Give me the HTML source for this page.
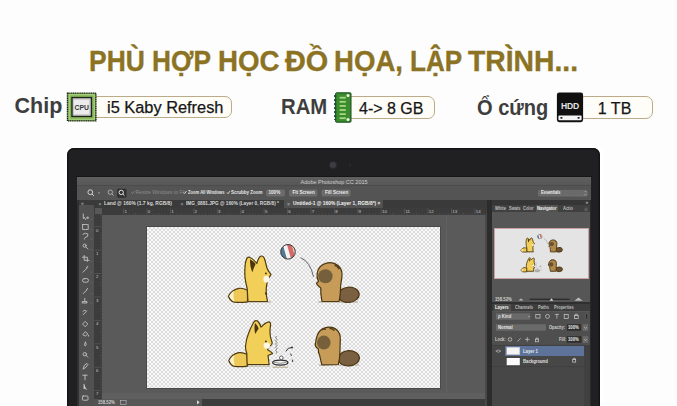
<!DOCTYPE html>
<html><head><meta charset="utf-8">
<style>

*{margin:0;padding:0;box-sizing:border-box}
html,body{width:677px;height:406px;overflow:hidden;background:#fdfdfd;font-family:"Liberation Sans",sans-serif}
.a{position:absolute}
.tw{position:absolute;top:46.5px;font-size:29px;line-height:1;font-weight:bold;color:#8b7323;-webkit-text-stroke:.35px #8b7323;white-space:nowrap;transform-origin:0 0}
.lbl{position:absolute;font-size:21.5px;line-height:1;font-weight:bold;color:#3e3e3e;white-space:nowrap;transform-origin:0 0}
.pill{position:absolute;border:1.2px solid #bcab88;background:#fffdf8;border-radius:7px}
.ptxt{position:absolute;font-size:16px;line-height:1;color:#161616;-webkit-text-stroke:.25px #161616;white-space:nowrap;transform-origin:0 0}
#bezel{left:66.7px;top:147.5px;width:533.6px;height:270px;background:#202023;border-radius:7px 7px 0 0;box-shadow:inset 0 0 0 1.5px #141416}
#screen{left:77px;top:176.8px;width:514px;height:230px;background:#535353}
.pst{white-space:nowrap;line-height:1}
.t5{white-space:nowrap;line-height:1;font-size:5px;transform-origin:0 0}
svg.a{overflow:visible}
.checker{background-color:#fff;background-image:conic-gradient(#dcdcdc 25%,#f8f8f8 0 50%,#dcdcdc 0 75%,#f8f8f8 0);background-size:4px 4px}

</style></head><body>
<div class="tw" style="left:89.3px;transform:scaleX(0.912)">PHÙ</div>
<div class="tw" style="left:151.8px;transform:scaleX(0.906)">HỢP</div>
<div class="tw" style="left:217.5px;transform:scaleX(0.955)">HỌC</div>
<div class="tw" style="left:285.2px;transform:scaleX(0.995)">ĐỒ</div>
<div class="tw" style="left:334.2px;transform:scaleX(0.952)">HỌA,</div>
<div class="tw" style="left:409.6px;transform:scaleX(0.9)">LẬP</div>
<div class="tw" style="left:468px;transform:scaleX(0.976)">TRÌNH...</div>

<div class="lbl" style="left:14.5px;top:96px">Chip</div>
<div class="lbl" style="left:280.7px;top:97.2px;transform:scaleX(.945)">RAM</div>
<div class="lbl" style="left:476.9px;top:98.4px;transform:scaleX(.933)">Ổ cứng</div>

<div class="pill" style="left:90px;top:95.9px;width:141.5px;height:22.6px"></div>
<div class="ptxt" style="left:106.8px;top:99.6px;transform:scaleX(1.023)">i5 Kaby Refresh</div>
<div class="pill" style="left:345px;top:96.2px;width:89.8px;height:23px"></div>
<div class="ptxt" style="left:359px;top:100.6px">4-&gt; 8 GB</div>
<div class="pill" style="left:578px;top:95.5px;width:74.8px;height:23px"></div>
<div class="ptxt" style="left:597.8px;top:100.5px">1 TB</div>

<!-- CPU icon -->
<svg class="a" style="left:66px;top:92px" width="31" height="30" viewBox="0 0 31 30">
 <rect x="1.5" y="1.1" width="28.4" height="27.8" fill="#82b157" stroke="#1b2413" stroke-width="1.4" stroke-dasharray="1.3 .5"/>
 <rect x="3.2" y="2.8" width="25" height="24.4" fill="none" stroke="#b9e08f" stroke-width=".8"/>
 <rect x="6" y="5.6" width="19.4" height="18.8" fill="#dcdcdc" stroke="#1f231c" stroke-width="1.4"/>
 <rect x="7.6" y="7.2" width="16.2" height="15.6" fill="#ececec" stroke="#b8b8b8" stroke-width=".6"/>
 <text x="15.7" y="17.9" font-family="Liberation Sans" font-weight="bold" font-size="6.8" fill="#383838" text-anchor="middle">CPU</text>
</svg>
<!-- RAM icon -->
<svg class="a" style="left:334px;top:92px" width="18" height="31" viewBox="0 0 18 31">
 <rect x="1.6" y="0.8" width="15.4" height="29.4" rx="1" fill="#3a8c2c" stroke="#1a4a1e" stroke-width="1"/>
 <path d="M1.2 3v25" stroke="#1f4f3a" stroke-width="2.2" stroke-dasharray="2.2 1.8"/>
 <g fill="#a6d883"><rect x="5.6" y="4.8" width="6.2" height="1.8"/><rect x="5.6" y="8.9" width="6.2" height="1.8"/><rect x="5.6" y="13" width="6.2" height="1.8"/><rect x="5.6" y="17.1" width="6.2" height="1.8"/><rect x="5.6" y="21.2" width="6.2" height="1.8"/><rect x="5.6" y="25.3" width="6.2" height="1.8"/></g>
 <circle cx="14" cy="3.4" r="1.5" fill="#f2fbe8"/><circle cx="14" cy="27.6" r="1.5" fill="#f2fbe8"/>
</svg>
<!-- HDD icon -->
<svg class="a" style="left:556px;top:91.5px" width="28" height="31" viewBox="0 0 28 31">
 <rect x="0.9" y="0.5" width="26.2" height="29.7" rx="2.4" fill="#101010"/>
 <text x="14" y="16.6" font-family="Liberation Sans" font-weight="bold" font-size="8.6" fill="#e2e2e2" text-anchor="middle" letter-spacing="-0.2">HDD</text>
 <rect x="2.4" y="23.4" width="23.2" height="4.9" rx="1" fill="#f4f4f4"/>
 <ellipse cx="5.4" cy="25.9" rx="1.2" ry=".8" fill="#101010"/><ellipse cx="22.6" cy="25.9" rx="1.2" ry=".8" fill="#101010"/>
</svg>

<div class="a" style="left:64px;top:144px;width:539px;height:270px;border-radius:9px 9px 0 0;background:#ffffff"></div>
<div id="bezel" class="a"></div>
<div class="a" style="left:329.8px;top:162.2px;width:6px;height:6px;border-radius:50%;background:#3c3c42;box-shadow:0 0 0 1px #2a2a2e"></div>
<div class="a" style="left:349px;top:164.2px;width:2px;height:2px;border-radius:50%;background:#2e2e32"></div>
<div id="screen" class="a"></div>
<div class="a" style="left:76px;top:175.9px;width:516px;height:1px;background:#161618"></div>
<!-- title bar -->
<div class="a" style="left:77px;top:176.8px;width:514px;height:8.5px;background:linear-gradient(#606060,#575757)"></div>
<!-- options bar -->
<div class="a" style="left:77px;top:185.3px;width:514px;height:14.5px;background:#545454;border-top:1px solid #4c4c4c"></div>
<!-- tab bar -->
<div class="a" style="left:77px;top:199.8px;width:415px;height:7.8px;background:#3a3a3a"></div>
<div class="a" style="left:283.6px;top:199.8px;width:99.6px;height:7.8px;background:#515151"></div>
<!-- left strip + toolbar -->
<div class="a" style="left:77px;top:199.8px;width:2px;height:207px;background:#303030"></div>
<div class="a" style="left:79px;top:205.4px;width:14.6px;height:201px;background:#515151"></div>
<!-- rulers -->
<div class="a" style="left:93.6px;top:207.6px;width:393.4px;height:7px;background:#3c3c3c"></div>
<div class="a" style="left:93.6px;top:207.6px;width:8px;height:191px;background:#3c3c3c"></div>
<div class="a" style="left:94.6px;top:208px;width:7px;height:6.4px;background:#585858"></div>
<!-- canvas -->
<div class="a" style="left:101.6px;top:214.6px;width:383px;height:178.4px;background:#5a5a5a"></div>
<div class="a" style="left:101.6px;top:393px;width:383px;height:5.7px;background:#5f5f5f"></div>
<div class="a" style="left:101.6px;top:398.7px;width:100px;height:8px;background:#575757"></div>
<div class="a" style="left:201.7px;top:398.7px;width:283px;height:8px;background:#3c3c3c"></div>
<div class="a" style="left:484.6px;top:214.6px;width:2.4px;height:192px;background:#484848"></div>
<div class="a" style="left:487px;top:199.8px;width:5px;height:207px;background:#2c2c2c"></div>
<div class="a" style="left:446px;top:214.6px;width:.8px;height:178.4px;background:#616161"></div>
<!-- image -->
<div class="a checker" style="left:147px;top:226.7px;width:292.8px;height:161.3px;box-shadow:0 0 0 1px #4a4a4a"></div>
<!-- panel -->
<div class="a" style="left:492px;top:199.8px;width:98.9px;height:207px;background:#565656"></div>
<div class="a" style="left:492px;top:199.8px;width:98.9px;height:5.2px;background:#363636"></div>
<div class="a" style="left:492px;top:205px;width:98.9px;height:7px;background:#404040"></div>
<div class="a" style="left:535.8px;top:205px;width:22.6px;height:7px;background:#545454"></div>
<div class="a" style="left:494px;top:227.8px;width:95px;height:51.7px;background:#e4e4e4;border:1px solid #c9a3a3"></div>
<div class="a" style="left:492px;top:302px;width:98.9px;height:1.6px;background:#303030"></div>
<div class="a" style="left:492px;top:303.6px;width:98.9px;height:7.9px;background:#3d3d3d"></div>
<div class="a" style="left:494.3px;top:303.6px;width:16.4px;height:7.9px;background:#505050"></div>
<div class="a" style="left:492px;top:311.5px;width:98.9px;height:33.7px;background:#4f4f4f"></div>
<div class="a" style="left:492px;top:345.2px;width:91.7px;height:62px;background:#474747"></div>
<div class="a" style="left:583.7px;top:345.2px;width:6px;height:62px;background:#404040"></div>
<div class="a" style="left:504.8px;top:345.7px;width:78.9px;height:10.7px;background:#5d7399"></div>
<div class="a" style="left:589.7px;top:199.8px;width:1.3px;height:207px;background:#2a2a2a"></div>

<svg class="a" style="left:93px;top:207px" width="395" height="8" viewBox="93 207 395 8">
<line x1="123.6" y1="208.5" x2="123.6" y2="214.6" stroke="#6e6e6e" stroke-width=".45"/>
<text x="124.4" y="212.6" font-family="Liberation Sans" font-size="4.4" fill="#c8c8c8">1</text>
<line x1="126.5" y1="213.7" x2="126.5" y2="214.6" stroke="#7a7a7a" stroke-width=".4"/>
<line x1="129.4" y1="213.7" x2="129.4" y2="214.6" stroke="#7a7a7a" stroke-width=".4"/>
<line x1="132.4" y1="213.7" x2="132.4" y2="214.6" stroke="#7a7a7a" stroke-width=".4"/>
<line x1="135.3" y1="213.0" x2="135.3" y2="214.6" stroke="#7a7a7a" stroke-width=".4"/>
<line x1="138.2" y1="213.7" x2="138.2" y2="214.6" stroke="#7a7a7a" stroke-width=".4"/>
<line x1="141.1" y1="213.7" x2="141.1" y2="214.6" stroke="#7a7a7a" stroke-width=".4"/>
<line x1="144.1" y1="213.7" x2="144.1" y2="214.6" stroke="#7a7a7a" stroke-width=".4"/>
<line x1="147.0" y1="208.5" x2="147.0" y2="214.6" stroke="#6e6e6e" stroke-width=".45"/>
<text x="147.8" y="212.6" font-family="Liberation Sans" font-size="4.4" fill="#c8c8c8">0</text>
<line x1="149.9" y1="213.7" x2="149.9" y2="214.6" stroke="#7a7a7a" stroke-width=".4"/>
<line x1="152.9" y1="213.7" x2="152.9" y2="214.6" stroke="#7a7a7a" stroke-width=".4"/>
<line x1="155.8" y1="213.7" x2="155.8" y2="214.6" stroke="#7a7a7a" stroke-width=".4"/>
<line x1="158.7" y1="213.0" x2="158.7" y2="214.6" stroke="#7a7a7a" stroke-width=".4"/>
<line x1="161.6" y1="213.7" x2="161.6" y2="214.6" stroke="#7a7a7a" stroke-width=".4"/>
<line x1="164.6" y1="213.7" x2="164.6" y2="214.6" stroke="#7a7a7a" stroke-width=".4"/>
<line x1="167.5" y1="213.7" x2="167.5" y2="214.6" stroke="#7a7a7a" stroke-width=".4"/>
<line x1="170.4" y1="208.5" x2="170.4" y2="214.6" stroke="#6e6e6e" stroke-width=".45"/>
<text x="171.2" y="212.6" font-family="Liberation Sans" font-size="4.4" fill="#c8c8c8">1</text>
<line x1="173.3" y1="213.7" x2="173.3" y2="214.6" stroke="#7a7a7a" stroke-width=".4"/>
<line x1="176.3" y1="213.7" x2="176.3" y2="214.6" stroke="#7a7a7a" stroke-width=".4"/>
<line x1="179.2" y1="213.7" x2="179.2" y2="214.6" stroke="#7a7a7a" stroke-width=".4"/>
<line x1="182.1" y1="213.0" x2="182.1" y2="214.6" stroke="#7a7a7a" stroke-width=".4"/>
<line x1="185.1" y1="213.7" x2="185.1" y2="214.6" stroke="#7a7a7a" stroke-width=".4"/>
<line x1="188.0" y1="213.7" x2="188.0" y2="214.6" stroke="#7a7a7a" stroke-width=".4"/>
<line x1="190.9" y1="213.7" x2="190.9" y2="214.6" stroke="#7a7a7a" stroke-width=".4"/>
<line x1="193.8" y1="208.5" x2="193.8" y2="214.6" stroke="#6e6e6e" stroke-width=".45"/>
<text x="194.6" y="212.6" font-family="Liberation Sans" font-size="4.4" fill="#c8c8c8">2</text>
<line x1="196.8" y1="213.7" x2="196.8" y2="214.6" stroke="#7a7a7a" stroke-width=".4"/>
<line x1="199.7" y1="213.7" x2="199.7" y2="214.6" stroke="#7a7a7a" stroke-width=".4"/>
<line x1="202.6" y1="213.7" x2="202.6" y2="214.6" stroke="#7a7a7a" stroke-width=".4"/>
<line x1="205.6" y1="213.0" x2="205.6" y2="214.6" stroke="#7a7a7a" stroke-width=".4"/>
<line x1="208.5" y1="213.7" x2="208.5" y2="214.6" stroke="#7a7a7a" stroke-width=".4"/>
<line x1="211.4" y1="213.7" x2="211.4" y2="214.6" stroke="#7a7a7a" stroke-width=".4"/>
<line x1="214.3" y1="213.7" x2="214.3" y2="214.6" stroke="#7a7a7a" stroke-width=".4"/>
<line x1="217.3" y1="208.5" x2="217.3" y2="214.6" stroke="#6e6e6e" stroke-width=".45"/>
<text x="218.1" y="212.6" font-family="Liberation Sans" font-size="4.4" fill="#c8c8c8">3</text>
<line x1="220.2" y1="213.7" x2="220.2" y2="214.6" stroke="#7a7a7a" stroke-width=".4"/>
<line x1="223.1" y1="213.7" x2="223.1" y2="214.6" stroke="#7a7a7a" stroke-width=".4"/>
<line x1="226.0" y1="213.7" x2="226.0" y2="214.6" stroke="#7a7a7a" stroke-width=".4"/>
<line x1="229.0" y1="213.0" x2="229.0" y2="214.6" stroke="#7a7a7a" stroke-width=".4"/>
<line x1="231.9" y1="213.7" x2="231.9" y2="214.6" stroke="#7a7a7a" stroke-width=".4"/>
<line x1="234.8" y1="213.7" x2="234.8" y2="214.6" stroke="#7a7a7a" stroke-width=".4"/>
<line x1="237.8" y1="213.7" x2="237.8" y2="214.6" stroke="#7a7a7a" stroke-width=".4"/>
<line x1="240.7" y1="208.5" x2="240.7" y2="214.6" stroke="#6e6e6e" stroke-width=".45"/>
<text x="241.5" y="212.6" font-family="Liberation Sans" font-size="4.4" fill="#c8c8c8">4</text>
<line x1="243.6" y1="213.7" x2="243.6" y2="214.6" stroke="#7a7a7a" stroke-width=".4"/>
<line x1="246.5" y1="213.7" x2="246.5" y2="214.6" stroke="#7a7a7a" stroke-width=".4"/>
<line x1="249.5" y1="213.7" x2="249.5" y2="214.6" stroke="#7a7a7a" stroke-width=".4"/>
<line x1="252.4" y1="213.0" x2="252.4" y2="214.6" stroke="#7a7a7a" stroke-width=".4"/>
<line x1="255.3" y1="213.7" x2="255.3" y2="214.6" stroke="#7a7a7a" stroke-width=".4"/>
<line x1="258.2" y1="213.7" x2="258.2" y2="214.6" stroke="#7a7a7a" stroke-width=".4"/>
<line x1="261.2" y1="213.7" x2="261.2" y2="214.6" stroke="#7a7a7a" stroke-width=".4"/>
<line x1="264.1" y1="208.5" x2="264.1" y2="214.6" stroke="#6e6e6e" stroke-width=".45"/>
<text x="264.9" y="212.6" font-family="Liberation Sans" font-size="4.4" fill="#c8c8c8">5</text>
<line x1="267.0" y1="213.7" x2="267.0" y2="214.6" stroke="#7a7a7a" stroke-width=".4"/>
<line x1="270.0" y1="213.7" x2="270.0" y2="214.6" stroke="#7a7a7a" stroke-width=".4"/>
<line x1="272.9" y1="213.7" x2="272.9" y2="214.6" stroke="#7a7a7a" stroke-width=".4"/>
<line x1="275.8" y1="213.0" x2="275.8" y2="214.6" stroke="#7a7a7a" stroke-width=".4"/>
<line x1="278.7" y1="213.7" x2="278.7" y2="214.6" stroke="#7a7a7a" stroke-width=".4"/>
<line x1="281.7" y1="213.7" x2="281.7" y2="214.6" stroke="#7a7a7a" stroke-width=".4"/>
<line x1="284.6" y1="213.7" x2="284.6" y2="214.6" stroke="#7a7a7a" stroke-width=".4"/>
<line x1="287.5" y1="208.5" x2="287.5" y2="214.6" stroke="#6e6e6e" stroke-width=".45"/>
<text x="288.3" y="212.6" font-family="Liberation Sans" font-size="4.4" fill="#c8c8c8">6</text>
<line x1="290.4" y1="213.7" x2="290.4" y2="214.6" stroke="#7a7a7a" stroke-width=".4"/>
<line x1="293.4" y1="213.7" x2="293.4" y2="214.6" stroke="#7a7a7a" stroke-width=".4"/>
<line x1="296.3" y1="213.7" x2="296.3" y2="214.6" stroke="#7a7a7a" stroke-width=".4"/>
<line x1="299.2" y1="213.0" x2="299.2" y2="214.6" stroke="#7a7a7a" stroke-width=".4"/>
<line x1="302.2" y1="213.7" x2="302.2" y2="214.6" stroke="#7a7a7a" stroke-width=".4"/>
<line x1="305.1" y1="213.7" x2="305.1" y2="214.6" stroke="#7a7a7a" stroke-width=".4"/>
<line x1="308.0" y1="213.7" x2="308.0" y2="214.6" stroke="#7a7a7a" stroke-width=".4"/>
<line x1="310.9" y1="208.5" x2="310.9" y2="214.6" stroke="#6e6e6e" stroke-width=".45"/>
<text x="311.7" y="212.6" font-family="Liberation Sans" font-size="4.4" fill="#c8c8c8">7</text>
<line x1="313.9" y1="213.7" x2="313.9" y2="214.6" stroke="#7a7a7a" stroke-width=".4"/>
<line x1="316.8" y1="213.7" x2="316.8" y2="214.6" stroke="#7a7a7a" stroke-width=".4"/>
<line x1="319.7" y1="213.7" x2="319.7" y2="214.6" stroke="#7a7a7a" stroke-width=".4"/>
<line x1="322.6" y1="213.0" x2="322.6" y2="214.6" stroke="#7a7a7a" stroke-width=".4"/>
<line x1="325.6" y1="213.7" x2="325.6" y2="214.6" stroke="#7a7a7a" stroke-width=".4"/>
<line x1="328.5" y1="213.7" x2="328.5" y2="214.6" stroke="#7a7a7a" stroke-width=".4"/>
<line x1="331.4" y1="213.7" x2="331.4" y2="214.6" stroke="#7a7a7a" stroke-width=".4"/>
<line x1="334.4" y1="208.5" x2="334.4" y2="214.6" stroke="#6e6e6e" stroke-width=".45"/>
<text x="335.2" y="212.6" font-family="Liberation Sans" font-size="4.4" fill="#c8c8c8">8</text>
<line x1="337.3" y1="213.7" x2="337.3" y2="214.6" stroke="#7a7a7a" stroke-width=".4"/>
<line x1="340.2" y1="213.7" x2="340.2" y2="214.6" stroke="#7a7a7a" stroke-width=".4"/>
<line x1="343.1" y1="213.7" x2="343.1" y2="214.6" stroke="#7a7a7a" stroke-width=".4"/>
<line x1="346.1" y1="213.0" x2="346.1" y2="214.6" stroke="#7a7a7a" stroke-width=".4"/>
<line x1="349.0" y1="213.7" x2="349.0" y2="214.6" stroke="#7a7a7a" stroke-width=".4"/>
<line x1="351.9" y1="213.7" x2="351.9" y2="214.6" stroke="#7a7a7a" stroke-width=".4"/>
<line x1="354.9" y1="213.7" x2="354.9" y2="214.6" stroke="#7a7a7a" stroke-width=".4"/>
<line x1="357.8" y1="208.5" x2="357.8" y2="214.6" stroke="#6e6e6e" stroke-width=".45"/>
<text x="358.6" y="212.6" font-family="Liberation Sans" font-size="4.4" fill="#c8c8c8">9</text>
<line x1="360.7" y1="213.7" x2="360.7" y2="214.6" stroke="#7a7a7a" stroke-width=".4"/>
<line x1="363.6" y1="213.7" x2="363.6" y2="214.6" stroke="#7a7a7a" stroke-width=".4"/>
<line x1="366.6" y1="213.7" x2="366.6" y2="214.6" stroke="#7a7a7a" stroke-width=".4"/>
<line x1="369.5" y1="213.0" x2="369.5" y2="214.6" stroke="#7a7a7a" stroke-width=".4"/>
<line x1="372.4" y1="213.7" x2="372.4" y2="214.6" stroke="#7a7a7a" stroke-width=".4"/>
<line x1="375.3" y1="213.7" x2="375.3" y2="214.6" stroke="#7a7a7a" stroke-width=".4"/>
<line x1="378.3" y1="213.7" x2="378.3" y2="214.6" stroke="#7a7a7a" stroke-width=".4"/>
<line x1="381.2" y1="208.5" x2="381.2" y2="214.6" stroke="#6e6e6e" stroke-width=".45"/>
<text x="382.0" y="212.6" font-family="Liberation Sans" font-size="4.4" fill="#c8c8c8">10</text>
<line x1="384.1" y1="213.7" x2="384.1" y2="214.6" stroke="#7a7a7a" stroke-width=".4"/>
<line x1="387.1" y1="213.7" x2="387.1" y2="214.6" stroke="#7a7a7a" stroke-width=".4"/>
<line x1="390.0" y1="213.7" x2="390.0" y2="214.6" stroke="#7a7a7a" stroke-width=".4"/>
<line x1="392.9" y1="213.0" x2="392.9" y2="214.6" stroke="#7a7a7a" stroke-width=".4"/>
<line x1="395.8" y1="213.7" x2="395.8" y2="214.6" stroke="#7a7a7a" stroke-width=".4"/>
<line x1="398.8" y1="213.7" x2="398.8" y2="214.6" stroke="#7a7a7a" stroke-width=".4"/>
<line x1="401.7" y1="213.7" x2="401.7" y2="214.6" stroke="#7a7a7a" stroke-width=".4"/>
<line x1="404.6" y1="208.5" x2="404.6" y2="214.6" stroke="#6e6e6e" stroke-width=".45"/>
<text x="405.4" y="212.6" font-family="Liberation Sans" font-size="4.4" fill="#c8c8c8">11</text>
<line x1="407.5" y1="213.7" x2="407.5" y2="214.6" stroke="#7a7a7a" stroke-width=".4"/>
<line x1="410.5" y1="213.7" x2="410.5" y2="214.6" stroke="#7a7a7a" stroke-width=".4"/>
<line x1="413.4" y1="213.7" x2="413.4" y2="214.6" stroke="#7a7a7a" stroke-width=".4"/>
<line x1="416.3" y1="213.0" x2="416.3" y2="214.6" stroke="#7a7a7a" stroke-width=".4"/>
<line x1="419.3" y1="213.7" x2="419.3" y2="214.6" stroke="#7a7a7a" stroke-width=".4"/>
<line x1="422.2" y1="213.7" x2="422.2" y2="214.6" stroke="#7a7a7a" stroke-width=".4"/>
<line x1="425.1" y1="213.7" x2="425.1" y2="214.6" stroke="#7a7a7a" stroke-width=".4"/>
<line x1="428.0" y1="208.5" x2="428.0" y2="214.6" stroke="#6e6e6e" stroke-width=".45"/>
<text x="428.8" y="212.6" font-family="Liberation Sans" font-size="4.4" fill="#c8c8c8">12</text>
<line x1="431.0" y1="213.7" x2="431.0" y2="214.6" stroke="#7a7a7a" stroke-width=".4"/>
<line x1="433.9" y1="213.7" x2="433.9" y2="214.6" stroke="#7a7a7a" stroke-width=".4"/>
<line x1="436.8" y1="213.7" x2="436.8" y2="214.6" stroke="#7a7a7a" stroke-width=".4"/>
<line x1="439.8" y1="213.0" x2="439.8" y2="214.6" stroke="#7a7a7a" stroke-width=".4"/>
<line x1="442.7" y1="213.7" x2="442.7" y2="214.6" stroke="#7a7a7a" stroke-width=".4"/>
<line x1="445.6" y1="213.7" x2="445.6" y2="214.6" stroke="#7a7a7a" stroke-width=".4"/>
<line x1="448.5" y1="213.7" x2="448.5" y2="214.6" stroke="#7a7a7a" stroke-width=".4"/>
<line x1="451.5" y1="208.5" x2="451.5" y2="214.6" stroke="#6e6e6e" stroke-width=".45"/>
<text x="452.3" y="212.6" font-family="Liberation Sans" font-size="4.4" fill="#c8c8c8">13</text>
<line x1="454.4" y1="213.7" x2="454.4" y2="214.6" stroke="#7a7a7a" stroke-width=".4"/>
<line x1="457.3" y1="213.7" x2="457.3" y2="214.6" stroke="#7a7a7a" stroke-width=".4"/>
<line x1="460.2" y1="213.7" x2="460.2" y2="214.6" stroke="#7a7a7a" stroke-width=".4"/>
<line x1="463.2" y1="213.0" x2="463.2" y2="214.6" stroke="#7a7a7a" stroke-width=".4"/>
<line x1="466.1" y1="213.7" x2="466.1" y2="214.6" stroke="#7a7a7a" stroke-width=".4"/>
<line x1="469.0" y1="213.7" x2="469.0" y2="214.6" stroke="#7a7a7a" stroke-width=".4"/>
<line x1="472.0" y1="213.7" x2="472.0" y2="214.6" stroke="#7a7a7a" stroke-width=".4"/>
<line x1="474.9" y1="208.5" x2="474.9" y2="214.6" stroke="#6e6e6e" stroke-width=".45"/>
<text x="475.7" y="212.6" font-family="Liberation Sans" font-size="4.4" fill="#c8c8c8">14</text>
<line x1="477.8" y1="213.7" x2="477.8" y2="214.6" stroke="#7a7a7a" stroke-width=".4"/>
<line x1="480.7" y1="213.7" x2="480.7" y2="214.6" stroke="#7a7a7a" stroke-width=".4"/>
<line x1="483.7" y1="213.7" x2="483.7" y2="214.6" stroke="#7a7a7a" stroke-width=".4"/>
<line x1="486.6" y1="213.0" x2="486.6" y2="214.6" stroke="#7a7a7a" stroke-width=".4"/>
</svg>
<svg class="a" style="left:93px;top:214px" width="9" height="186" viewBox="93 214 9 186">
<line x1="94.5" y1="226.7" x2="101.6" y2="226.7" stroke="#6e6e6e" stroke-width=".45"/>
<text x="96" y="231.5" font-family="Liberation Sans" font-size="4.4" fill="#c8c8c8">0</text>
<line x1="100.7" y1="229.6" x2="101.6" y2="229.6" stroke="#7a7a7a" stroke-width=".4"/>
<line x1="100.7" y1="232.6" x2="101.6" y2="232.6" stroke="#7a7a7a" stroke-width=".4"/>
<line x1="100.7" y1="235.5" x2="101.6" y2="235.5" stroke="#7a7a7a" stroke-width=".4"/>
<line x1="100.0" y1="238.4" x2="101.6" y2="238.4" stroke="#7a7a7a" stroke-width=".4"/>
<line x1="100.7" y1="241.3" x2="101.6" y2="241.3" stroke="#7a7a7a" stroke-width=".4"/>
<line x1="100.7" y1="244.3" x2="101.6" y2="244.3" stroke="#7a7a7a" stroke-width=".4"/>
<line x1="100.7" y1="247.2" x2="101.6" y2="247.2" stroke="#7a7a7a" stroke-width=".4"/>
<line x1="94.5" y1="250.1" x2="101.6" y2="250.1" stroke="#6e6e6e" stroke-width=".45"/>
<text x="96" y="254.9" font-family="Liberation Sans" font-size="4.4" fill="#c8c8c8">1</text>
<line x1="100.7" y1="253.0" x2="101.6" y2="253.0" stroke="#7a7a7a" stroke-width=".4"/>
<line x1="100.7" y1="256.0" x2="101.6" y2="256.0" stroke="#7a7a7a" stroke-width=".4"/>
<line x1="100.7" y1="258.9" x2="101.6" y2="258.9" stroke="#7a7a7a" stroke-width=".4"/>
<line x1="100.0" y1="261.8" x2="101.6" y2="261.8" stroke="#7a7a7a" stroke-width=".4"/>
<line x1="100.7" y1="264.8" x2="101.6" y2="264.8" stroke="#7a7a7a" stroke-width=".4"/>
<line x1="100.7" y1="267.7" x2="101.6" y2="267.7" stroke="#7a7a7a" stroke-width=".4"/>
<line x1="100.7" y1="270.6" x2="101.6" y2="270.6" stroke="#7a7a7a" stroke-width=".4"/>
<line x1="94.5" y1="273.5" x2="101.6" y2="273.5" stroke="#6e6e6e" stroke-width=".45"/>
<text x="96" y="278.3" font-family="Liberation Sans" font-size="4.4" fill="#c8c8c8">2</text>
<line x1="100.7" y1="276.5" x2="101.6" y2="276.5" stroke="#7a7a7a" stroke-width=".4"/>
<line x1="100.7" y1="279.4" x2="101.6" y2="279.4" stroke="#7a7a7a" stroke-width=".4"/>
<line x1="100.7" y1="282.3" x2="101.6" y2="282.3" stroke="#7a7a7a" stroke-width=".4"/>
<line x1="100.0" y1="285.2" x2="101.6" y2="285.2" stroke="#7a7a7a" stroke-width=".4"/>
<line x1="100.7" y1="288.2" x2="101.6" y2="288.2" stroke="#7a7a7a" stroke-width=".4"/>
<line x1="100.7" y1="291.1" x2="101.6" y2="291.1" stroke="#7a7a7a" stroke-width=".4"/>
<line x1="100.7" y1="294.0" x2="101.6" y2="294.0" stroke="#7a7a7a" stroke-width=".4"/>
<line x1="94.5" y1="297.0" x2="101.6" y2="297.0" stroke="#6e6e6e" stroke-width=".45"/>
<text x="96" y="301.8" font-family="Liberation Sans" font-size="4.4" fill="#c8c8c8">3</text>
<line x1="100.7" y1="299.9" x2="101.6" y2="299.9" stroke="#7a7a7a" stroke-width=".4"/>
<line x1="100.7" y1="302.8" x2="101.6" y2="302.8" stroke="#7a7a7a" stroke-width=".4"/>
<line x1="100.7" y1="305.7" x2="101.6" y2="305.7" stroke="#7a7a7a" stroke-width=".4"/>
<line x1="100.0" y1="308.7" x2="101.6" y2="308.7" stroke="#7a7a7a" stroke-width=".4"/>
<line x1="100.7" y1="311.6" x2="101.6" y2="311.6" stroke="#7a7a7a" stroke-width=".4"/>
<line x1="100.7" y1="314.5" x2="101.6" y2="314.5" stroke="#7a7a7a" stroke-width=".4"/>
<line x1="100.7" y1="317.5" x2="101.6" y2="317.5" stroke="#7a7a7a" stroke-width=".4"/>
<line x1="94.5" y1="320.4" x2="101.6" y2="320.4" stroke="#6e6e6e" stroke-width=".45"/>
<text x="96" y="325.2" font-family="Liberation Sans" font-size="4.4" fill="#c8c8c8">4</text>
<line x1="100.7" y1="323.3" x2="101.6" y2="323.3" stroke="#7a7a7a" stroke-width=".4"/>
<line x1="100.7" y1="326.2" x2="101.6" y2="326.2" stroke="#7a7a7a" stroke-width=".4"/>
<line x1="100.7" y1="329.2" x2="101.6" y2="329.2" stroke="#7a7a7a" stroke-width=".4"/>
<line x1="100.0" y1="332.1" x2="101.6" y2="332.1" stroke="#7a7a7a" stroke-width=".4"/>
<line x1="100.7" y1="335.0" x2="101.6" y2="335.0" stroke="#7a7a7a" stroke-width=".4"/>
<line x1="100.7" y1="337.9" x2="101.6" y2="337.9" stroke="#7a7a7a" stroke-width=".4"/>
<line x1="100.7" y1="340.9" x2="101.6" y2="340.9" stroke="#7a7a7a" stroke-width=".4"/>
<line x1="94.5" y1="343.8" x2="101.6" y2="343.8" stroke="#6e6e6e" stroke-width=".45"/>
<text x="96" y="348.6" font-family="Liberation Sans" font-size="4.4" fill="#c8c8c8">5</text>
<line x1="100.7" y1="346.7" x2="101.6" y2="346.7" stroke="#7a7a7a" stroke-width=".4"/>
<line x1="100.7" y1="349.7" x2="101.6" y2="349.7" stroke="#7a7a7a" stroke-width=".4"/>
<line x1="100.7" y1="352.6" x2="101.6" y2="352.6" stroke="#7a7a7a" stroke-width=".4"/>
<line x1="100.0" y1="355.5" x2="101.6" y2="355.5" stroke="#7a7a7a" stroke-width=".4"/>
<line x1="100.7" y1="358.4" x2="101.6" y2="358.4" stroke="#7a7a7a" stroke-width=".4"/>
<line x1="100.7" y1="361.4" x2="101.6" y2="361.4" stroke="#7a7a7a" stroke-width=".4"/>
<line x1="100.7" y1="364.3" x2="101.6" y2="364.3" stroke="#7a7a7a" stroke-width=".4"/>
<line x1="94.5" y1="367.2" x2="101.6" y2="367.2" stroke="#6e6e6e" stroke-width=".45"/>
<text x="96" y="372.0" font-family="Liberation Sans" font-size="4.4" fill="#c8c8c8">6</text>
<line x1="100.7" y1="370.1" x2="101.6" y2="370.1" stroke="#7a7a7a" stroke-width=".4"/>
<line x1="100.7" y1="373.1" x2="101.6" y2="373.1" stroke="#7a7a7a" stroke-width=".4"/>
<line x1="100.7" y1="376.0" x2="101.6" y2="376.0" stroke="#7a7a7a" stroke-width=".4"/>
<line x1="100.0" y1="378.9" x2="101.6" y2="378.9" stroke="#7a7a7a" stroke-width=".4"/>
<line x1="100.7" y1="381.9" x2="101.6" y2="381.9" stroke="#7a7a7a" stroke-width=".4"/>
<line x1="100.7" y1="384.8" x2="101.6" y2="384.8" stroke="#7a7a7a" stroke-width=".4"/>
<line x1="100.7" y1="387.7" x2="101.6" y2="387.7" stroke="#7a7a7a" stroke-width=".4"/>
<line x1="94.5" y1="390.6" x2="101.6" y2="390.6" stroke="#6e6e6e" stroke-width=".45"/>
<text x="96" y="395.4" font-family="Liberation Sans" font-size="4.4" fill="#c8c8c8">7</text>
<line x1="100.7" y1="393.6" x2="101.6" y2="393.6" stroke="#7a7a7a" stroke-width=".4"/>
<line x1="100.7" y1="396.5" x2="101.6" y2="396.5" stroke="#7a7a7a" stroke-width=".4"/>
<line x1="100.7" y1="223.8" x2="101.6" y2="223.8" stroke="#7a7a7a" stroke-width=".4"/>
<line x1="100.7" y1="220.8" x2="101.6" y2="220.8" stroke="#7a7a7a" stroke-width=".4"/>
<line x1="100.7" y1="217.9" x2="101.6" y2="217.9" stroke="#7a7a7a" stroke-width=".4"/>
<line x1="100.0" y1="215.0" x2="101.6" y2="215.0" stroke="#7a7a7a" stroke-width=".4"/>
</svg>
<svg class="a" style="left:79px;top:205px" width="15" height="202" viewBox="79 205 15 202">
<g fill="none" stroke="#c4c4c4" stroke-width=".9" stroke-linecap="round">
 <path d="M83.3 214v4.6l1.2-1.1 1.1 2" /><circle cx="87.6" cy="217.8" r="1.3" fill="#aaa" stroke="none"/>
 <rect x="82.6" y="224.5" width="5.6" height="5" stroke-dasharray="1 .7"/>
 <path d="M83 234.2q2.5-2 5 0q0 3-3 3.4q-1 .5-.6 1.5"/>
 <circle cx="84.6" cy="245.6" r="1.6"/><path d="M85.7 246.8l2.3 2.3"/>
 <path d="M82.5 257.2h4.8v4.2M84.2 255.5v4.8h4.8"/>
 <path d="M83 272.2l4.5-4.5M86.5 267.6l1.4-1.4"/>
 <rect x="82.5" y="278.6" width="6" height="3.6" rx="1.8"/>
 <path d="M83.2 293.6l3.6-3.6M86.5 289.5l1.2-1"/>
 <path d="M84.8 298.5v2.2M82.6 301.6h4.4v1.4h-4.4z"/>
 <path d="M83.2 314.6l3.6-3.6M83 311.2q1.2-1.4 2.6-.8"/>
 <path d="M82.8 323.8l2.4-2.4 2.6 2.6-2.4 2.4z"/>
 <path d="M83 334.4l2.4-2.8 2.4 2.4-2.2 1.8zM88.4 335.2v1"/>
 <path d="M85.4 342.2q-2 2.6-.2 3.8q2 -1 .2-3.8z"/>
 <circle cx="84.8" cy="354.2" r="1.7"/><path d="M86 355.4l1.8 1.8"/>
 <path d="M83.2 368.8l1.2-3.6 2.6-1.8 1 1-1.8 2.6z"/>
 <path d="M82.8 375.2h4.4M85 375.2v4.6"/>
 <path d="M84 384.2v4.8l1.2-1.2 1.2 1.8" fill="#ddd"/>
 <rect x="82.4" y="396" width="5.6" height="4.2" rx=".8"/>
</g>
<path d="M90.6 218.8l.9.9.9-.9M90.6 229l.9.9.9-.9M90.6 238.8l.9.9.9-.9M90.6 249l.9.9.9-.9M90.6 260.6l.9.9.9-.9M90.6 271.5l.9.9.9-.9M90.6 282.4l.9.9.9-.9M90.6 293.2l.9.9.9-.9M90.6 303l.9.9.9-.9" fill="none" stroke="#888" stroke-width=".4"/>
</svg>

<!-- PS UI texts -->
<div class="a t5" style="left:300.6px;top:179.6px;font-size:5.5px;color:#d0d0d0">Adobe Photoshop CC 2015</div>
<!-- options bar -->
<svg class="a" style="left:77px;top:186px" width="514" height="14" viewBox="77 186 514 14">
 <g fill="none" stroke="#d0d0d0" stroke-width="1">
  <circle cx="90.3" cy="192.2" r="2.4"/><line x1="92" y1="194" x2="94" y2="196"/>
  <circle cx="110.3" cy="192.2" r="2.2" stroke="#aaa"/><line x1="111.9" y1="193.9" x2="113.6" y2="195.6" stroke="#aaa"/>
 </g>
 <path d="M97.8 192.4h2.2l-1.1 1.3z" fill="#bbb"/>
 <rect x="117.4" y="189" width="8.8" height="8.4" rx="1" fill="#333" stroke="#2a2a2a" stroke-width=".5"/>
 <g fill="none" stroke="#e0e0e0" stroke-width="1"><circle cx="121.2" cy="192.4" r="2.2"/><line x1="122.8" y1="194" x2="124.5" y2="195.7"/></g>
 <path d="M131.5 192.5l1 1.2 2-2.6" fill="none" stroke="#8a8a8a" stroke-width=".8"/>
 <path d="M183.5 192.5l1 1.2 2-2.6" fill="none" stroke="#e8e8e8" stroke-width=".9"/>
 <path d="M227 192.5l1 1.2 2-2.6" fill="none" stroke="#e8e8e8" stroke-width=".9"/>
 <g fill="#6a6a6a" stroke="#7c7c7c" stroke-width=".5">
  <rect x="266.6" y="190" width="17.8" height="6" rx="1"/>
  <rect x="289.5" y="190" width="27.4" height="6" rx="1"/>
  <rect x="322" y="190" width="28.1" height="6" rx="1"/>
  <rect x="538.3" y="190.4" width="49" height="5.7" rx="1"/>
 </g>
 <path d="M584.5 192.2l.9-1 .9 1M584.5 194.2l.9 1 .9-1" fill="none" stroke="#ccc" stroke-width=".5"/>
</svg>
<div class="a t5" style="left:135.5px;top:190.4px;color:#8c8c8c">Resize Windows to Fit</div>
<div class="a t5" style="left:187.5px;top:190.4px;color:#e6e6e6;font-weight:bold;transform:scaleX(.82)">Zoom All Windows</div>
<div class="a t5" style="left:231px;top:190.4px;color:#e6e6e6;font-weight:bold;transform:scaleX(.9)">Scrubby Zoom</div>
<div class="a t5" style="left:268.5px;top:190.8px;color:#e8e8e8;font-size:4.6px;font-weight:bold">100%</div>
<div class="a t5" style="left:292.5px;top:190.8px;color:#e8e8e8;font-size:4.6px;font-weight:bold">Fit Screen</div>
<div class="a t5" style="left:325px;top:190.8px;color:#e8e8e8;font-size:4.6px;font-weight:bold">Fill Screen</div>
<div class="a t5" style="left:540.5px;top:190.8px;color:#f0f0f0;font-size:4.6px;font-weight:bold;transform:scaleX(.85)">Essentials</div>
<!-- tabs -->
<div class="a t5" style="left:81px;top:201.3px;color:#bbb;font-size:5px">»</div>
<div class="a t5" style="left:98.5px;top:201.6px;color:#aaa">×</div>
<div class="a t5" style="left:104px;top:201.3px;color:#d8d8d8;font-weight:bold;transform:scaleX(.98)">Land @ 160% (1.7 kg, RGB/8)</div>
<div class="a t5" style="left:180.5px;top:201.6px;color:#aaa">×</div>
<div class="a t5" style="left:185.5px;top:201.3px;color:#d8d8d8;font-weight:bold;transform:scaleX(.94)">IMG_0881.JPG @ 160% (Layer 0, RGB/8) *</div>
<div class="a t5" style="left:287px;top:201.6px;color:#bbb">×</div>
<div class="a t5" style="left:292.5px;top:201.3px;color:#f2f2f2;font-weight:bold;transform:scaleX(.97)">Untitled-1 @ 160% (Layer 1, RGB/8*) ×</div>
<!-- panel tabs -->
<div class="a t5" style="left:495.4px;top:206px;color:#bdbdbd;font-weight:bold;transform:scaleX(.8)">White</div>
<div class="a t5" style="left:509.4px;top:206px;color:#bdbdbd;font-weight:bold;transform:scaleX(.8)">Swats</div>
<div class="a t5" style="left:522.7px;top:206px;color:#bdbdbd;font-weight:bold;transform:scaleX(.8)">Color</div>
<div class="a t5" style="left:536.5px;top:206px;color:#f4f4f4;font-weight:bold;transform:scaleX(.85)">Navigator</div>
<div class="a t5" style="left:562.8px;top:206px;color:#bdbdbd;font-weight:bold;transform:scaleX(.8)">Actio</div>
<div class="a t5" style="left:585.5px;top:200.2px;color:#ccc;font-size:5px">»</div>
<svg class="a" style="left:583px;top:206px" width="6" height="6" viewBox="0 0 6 6"><path d="M1.5 2.2h3M1.5 3.4h3M1.5 4.6h3" stroke="#999" stroke-width=".35"/></svg>
<!-- navigator bottom -->
<div class="a t5" style="left:495px;top:296.8px;color:#d0d0d0;font-weight:bold;transform:scaleX(.85)">158.52%</div>
<svg class="a" style="left:515px;top:294px" width="76" height="8" viewBox="515 294 76 8">
 <path d="M518.5 300.5l2.5-2 2.5 2z" fill="#bbb"/>
 <rect x="529.5" y="298.6" width="40" height="1.4" fill="#2e2e2e"/>
 <path d="M549.7 300.8l1.8-2.5 1.8 2.5z" fill="#ddd"/>
 <path d="M574.5 300.8l4-3.4 4 3.4z" fill="#bbb"/>
</svg>
<!-- layers tabs -->
<div class="a t5" style="left:495.3px;top:304.8px;color:#f4f4f4;font-weight:bold;transform:scaleX(.85)">Layers</div>
<div class="a t5" style="left:514.6px;top:304.8px;color:#bdbdbd;font-weight:bold;transform:scaleX(.8)">Channels</div>
<div class="a t5" style="left:538px;top:304.8px;color:#bdbdbd;font-weight:bold;transform:scaleX(.8)">Paths</div>
<div class="a t5" style="left:553.7px;top:304.8px;color:#bdbdbd;font-weight:bold;transform:scaleX(.8)">Properties</div>
<svg class="a" style="left:492px;top:311px" width="99" height="60" viewBox="492 311 99 60">
 <rect x="495.8" y="313.2" width="34.5" height="6.6" rx=".8" fill="#6a6a6a"/>
 <rect x="495.8" y="324.2" width="50.1" height="6.6" rx=".8" fill="#6a6a6a"/>
 <rect x="567" y="324.2" width="14" height="6.6" fill="#2f2f2f"/>
 <rect x="582.7" y="324.2" width="5.5" height="6.6" fill="#6a6a6a"/>
 <rect x="566.7" y="336.2" width="14.9" height="6.6" fill="#2f2f2f"/>
 <rect x="582.6" y="336.2" width="5.6" height="6.6" fill="#6a6a6a"/>
 <g fill="none" stroke="#cfcfcf" stroke-width=".7">
  <rect x="535.8" y="314.5" width="4.2" height="3.6"/>
  <circle cx="547.5" cy="316.4" r="2"/>
  <path d="M554.8 314.4h4.2M556.9 314.4v4.2"/>
  <rect x="564.2" y="314.4" width="4" height="4"/>
  <rect x="574.4" y="315.4" width="3.8" height="3"/><path d="M575.2 315.4v-1.2h2.2v1.2"/>
  <circle cx="510" cy="339.4" r="1.8"/>
  <path d="M517.5 341.5l3-3.2"/>
  <path d="M527.3 337.2v4.4M525.1 339.4h4.4"/>
  <rect x="535.6" y="339.2" width="3" height="2.6"/><path d="M536.1 339.2v-1.1h2v1.1"/>
  <rect x="572.7" y="359.5" width="3" height="2.6"/><path d="M573.2 359.5v-1.1h2v1.1"/>
 </g>
 <path d="M528.3 316.2l.8.9.8-.9M528.3 318.2" fill="none" stroke="#ccc" stroke-width=".5"/>
 <rect x="585.4" y="313.4" width="2.4" height="6" rx="1.2" fill="#2f2f2f" stroke="#888" stroke-width=".4"/>
 <path d="M584.3 327.2l1.3 1.3 1.3-1.3M584.3 339.3l1.3 1.3 1.3-1.3" fill="none" stroke="#ddd" stroke-width=".6"/>
 <path d="M495.8 351.1q2.5-2.4 5 0q-2.5 2.4-5 0z" fill="none" stroke="#ccc" stroke-width=".6"/>
 <rect x="506.7" y="347.2" width="13.1" height="7.5" fill="#f4f4f4" stroke="#bbb" stroke-width=".5"/>
 <rect x="506.7" y="358" width="13.1" height="7.2" fill="#fafafa"/>
 <line x1="492" y1="345.4" x2="584.4" y2="345.4" stroke="#3a3a3a" stroke-width=".6"/>
 <line x1="492" y1="366.6" x2="584.4" y2="366.6" stroke="#3a3a3a" stroke-width=".6"/>
</svg>
<div class="a t5" style="left:498px;top:314px;color:#e0e0e0;font-weight:bold;transform:scaleX(.85)">ρ Kind</div>
<div class="a t5" style="left:498px;top:325px;color:#e8e8e8;font-weight:bold;transform:scaleX(.85)">Normal</div>
<div class="a t5" style="left:549px;top:325px;color:#cfcfcf;font-weight:bold;transform:scaleX(.8)">Opacity:</div>
<div class="a t5" style="left:568.3px;top:325.2px;color:#e8e8e8;font-weight:bold;transform:scaleX(.85)">100%</div>
<div class="a t5" style="left:494.6px;top:337px;color:#cfcfcf;font-weight:bold;transform:scaleX(.8)">Lock:</div>
<div class="a t5" style="left:559.2px;top:337px;color:#cfcfcf;font-weight:bold;transform:scaleX(.8)">Fill:</div>
<div class="a t5" style="left:568px;top:337.2px;color:#e8e8e8;font-weight:bold;transform:scaleX(.85)">100%</div>
<div class="a t5" style="left:522.6px;top:348.6px;color:#e6ecf4;font-weight:bold;transform:scaleX(.85)">Layer 1</div>
<div class="a t5" style="left:522.6px;top:359px;color:#e0e0e0;font-weight:bold;transform:scaleX(.85)">Background</div>
<!-- status bar -->
<div class="a t5" style="left:98px;top:400px;color:#d0d0d0;font-weight:bold;transform:scaleX(.85)">158.52%</div>
<svg class="a" style="left:119px;top:399px" width="84" height="7" viewBox="119 399 84 7">
 <rect x="120.3" y="400.3" width="5.8" height="4.2" fill="none" stroke="#bbb" stroke-width=".6"/>
 <path d="M197 400.2v4.2l2.6-2.1z" fill="#ddd"/>
</svg>

<svg class="a" style="left:0;top:0" width="677" height="406" viewBox="0 0 677 406">
<defs>
 <clipPath id="ballclip"><circle cx="288" cy="251.8" r="7.3"/></clipPath>
 <clipPath id="navclip"><rect x="495" y="228.8" width="93" height="49.7"/></clipPath>
 <g id="chars" stroke-linejoin="round">
  <!-- fox 1 -->
  <g stroke="#4f3b12">
   <path d="M247.5 290.2C244 288.5 241 288 238.8 288.4C234.5 289.2 230.5 292.5 228.4 296.2C229.5 299 231 301 233 301.8C238 302.6 243 302.5 247.5 301.8Z" fill="#efc957"/>
   <path d="M229.2 296.2C230.6 293.6 232.2 292 234 291C233.2 294.2 233.2 298 234.5 301.2C232.2 300.8 230.4 298.8 229.2 296.2Z" fill="#fbf2d0" stroke="none"/>
   <path d="M248 301.5C247.5 297 247.6 292 247.2 288.5C246 284 244.8 279 244.8 273.5C244.8 268 245.4 262 246.2 260C246.8 257.5 248 257 249.5 257.2C251.5 257.8 254.5 260.5 256.8 263.5C257.5 261 258.8 257.5 260.5 256.3C262 255.5 263.5 256.5 264.4 258.5C265.3 261 266 264 266.8 267.5C267.5 270 269 272 271 274.5C270.5 276 269.8 276.5 269.3 277C268.5 279 268 280 267.5 281.5C266.8 284 266.4 286 266.3 288C266 292 266.5 297 267.5 301.5Z" fill="#f2cf58"/>
  </g>
  <path d="M250 259.2C252 260.2 254.2 262 255.6 264C254.5 266.5 253.2 269.5 252.4 272.2C250.6 268.5 249.8 263.5 250 259.2Z" fill="#4a3510"/>
  <ellipse cx="266.4" cy="279.2" rx="3" ry="3.4" fill="#fdf8e8"/>
  <circle cx="265.9" cy="273.4" r=".9" fill="#3a2a0a"/>
  <path d="M265.3 292.5l.8 2" stroke="#4a3510" stroke-width="1.2"/>
  <path d="M244 302h27" stroke="#6b5a30" stroke-width=".8" opacity=".6"/>
  <!-- ball -->
  <g clip-path="url(#ballclip)">
   <rect x="279" y="243" width="18" height="18" fill="#f6f2f0"/>
   <g transform="rotate(-16 288 251.8)">
    <rect x="279" y="242" width="6" height="20" fill="#4f7b93"/>
    <rect x="289" y="242" width="4.6" height="20" fill="#d26a6a"/>
    <rect x="293.6" y="242" width="4" height="20" fill="#eec8c0"/>
   </g>
  </g>
  <circle cx="288" cy="251.8" r="7.3" fill="none" stroke="#3a3a3a" stroke-width="1"/>
  <path d="M300.6 257.6Q310.5 262 313.5 276.9" fill="none" stroke="#555" stroke-width=".9"/>
  <!-- tanuki 1 -->
  <g stroke="#4a3512">
   <ellipse cx="348.6" cy="294.8" rx="10.6" ry="7.6" style="fill:var(--tt)" transform="rotate(-6 348.6 294.8)"/>
   <path d="M322 301.5C321 297 320.5 292 320.8 288C319.5 287 317.5 285.5 316.5 283.5C317 282.2 318 281.8 318.6 281.5C317.2 279 316.6 276 317.2 273C318 268.5 321.5 264.5 326.5 263.2C330.5 262.2 335 263 338 265.5C341 268 342.2 271.5 342 275.5C341.8 279.5 340.8 283 340.6 286.5C340.4 292 340.3 297 339 301.5Z" style="fill:var(--tb)"/>
  </g>
  <ellipse cx="325.4" cy="276.2" rx="7.2" ry="7" style="fill:var(--tp)"/>
  <path d="M334.5 265q3 .2 4.8 4.2" stroke="#5a3f18" stroke-width="2" fill="none"/>
  <path d="M318 302h40" stroke="#6b5a30" stroke-width=".8" opacity=".6"/>
  <!-- fox 2 -->
  <g stroke="#4f3b12">
   <path d="M247.2 354.5C244 352.8 241 352.3 238.8 352.7C234.5 353.5 230.5 356.8 228.8 360.5C229.8 363.3 231.3 365.3 233.3 366.1C238.3 366.9 243.3 366.8 247.5 366.1Z" fill="#efc957"/>
   <path d="M229.6 360.5C231 357.9 232.6 356.3 234.4 355.3C233.6 358.5 233.6 362.3 234.9 365.5C232.6 365.1 230.8 363.1 229.6 360.5Z" fill="#fbf2d0" stroke="none"/>
   <path d="M247.2 364.5C246.8 360 247 356.5 246.8 353.5C245.8 350.5 245.3 348.5 245.5 346.3C246 341 247 337 248.5 333.5C249.8 330 251.5 326 253.5 322.5C254.5 320.8 256 320.3 257.5 321C259 322.5 260.5 325 261 327.2C263 325 266 322.5 268.6 321.9C270 321.8 270.6 322.8 270.6 324.5C270.3 327 270 329.5 270 331.2C270 333 270.2 335 270.4 336.5C270.8 338.5 271.5 340.5 272.1 342.3C272.2 343.5 272 344 271.7 344.5C270.5 346 269.5 346.5 268.6 347.1C268 348 267.8 349 267.7 349.8C269.5 351 272 352 272.6 353.5C271.5 354.5 269.5 354.5 268 355.5C268.5 358 268.8 361 269.1 364.5Z" fill="#f2cf58"/>
  </g>
  <path d="M255 323C257 325 258.4 327 258.6 328.8C257.5 330.5 256.2 332.2 255.3 334C254.2 330.5 254.3 326.5 255 323Z" fill="#4a3510"/>
  <ellipse cx="266.8" cy="345.6" rx="3.2" ry="3.2" fill="#fdf8e8"/>
  <circle cx="265.9" cy="341.4" r=".9" fill="#3a2a0a"/>
  <path d="M245 366h25" stroke="#6b5a30" stroke-width=".8" opacity=".6"/>
  <!-- steam, bowl -->
  <path d="M276.5 336l-1 1.6 1.6 1.6-1.6 1.6 1.6 1.6-1.6 1.6 1.6 1.6-1.6 1.6 1.6 1.6-1.6 1.6 1.6 1.6-1 1.6" fill="none" stroke="#6a6a6a" stroke-width=".8"/>
  <ellipse cx="280.3" cy="362.6" rx="7.6" ry="2.5" fill="#f2f2f2" stroke="#333" stroke-width="1.3"/>
  <path d="M274 362.2q6.3 2.4 12.6 0" fill="none" stroke="#555" stroke-width=".6"/>
  <circle cx="281.3" cy="357.8" r="1.8" fill="#fff" stroke="#444" stroke-width=".8"/>
  <path d="M272.5 367.2H288" stroke="#a89870" stroke-width=".8"/>
  <path d="M285.8 351.4Q288 347 291.6 347.6M290.6 353.6l.9 2.2M292.2 359.6l.7 2.4" fill="none" stroke="#333" stroke-width="1"/>
  <circle cx="292" cy="347.4" r="1" fill="#333"/>
  <!-- tanuki 2 -->
  <g stroke="#4a3512">
   <ellipse cx="348.8" cy="358.3" rx="10.6" ry="7.6" style="fill:var(--tt)" transform="rotate(-4 348.8 358.3)"/>
   <path d="M321.8 364.8C320.8 360.5 320 357 319.6 355C318.5 353.5 318.2 351 318.3 349C316.6 347.8 315 346.3 315.2 344.5C315.6 341.5 316.3 338 317.2 335.5C318.5 331.5 322 328.3 326.5 327.3C330.5 326.6 334.5 327.5 337 330C339.5 332.5 340.4 335.5 340.3 339C340.2 344 340 348.5 339.9 352.7C339.8 357 339.2 361 338.3 364.5Z" style="fill:var(--tb)"/>
  </g>
  <ellipse cx="323.8" cy="342.6" rx="6.8" ry="7" style="fill:var(--tp)"/>
  <path d="M321.5 329.8q2-1.4 4.5-.6M329.5 328.6q3-.6 4.8 2" stroke="#5a3f18" stroke-width="1.6" fill="none"/>
  <path d="M319 365h40" stroke="#6b5a30" stroke-width=".8" opacity=".6"/>
 </g>
</defs>
<use href="#chars" stroke-width="1.2" style="--tb:#c69c58;--tt:#7a6040;--tp:#76603c"/>
<g clip-path="url(#navclip)"><use href="#chars" stroke-width="2.8" style="--tb:#b08848;--tt:#6e5230;--tp:#6a5030" transform="translate(495 228.8) scale(.3176 .308) translate(-147 -226.7)"/></g>
</svg>

</body></html>
